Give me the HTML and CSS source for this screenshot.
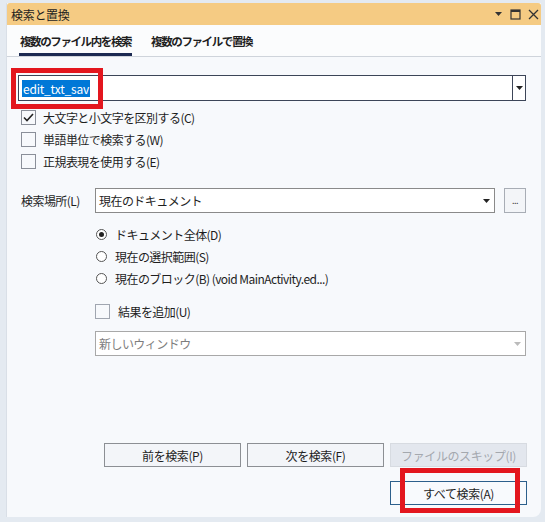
FILE: index.html
```html
<!DOCTYPE html>
<html lang="ja">
<head>
<meta charset="utf-8">
<link rel="stylesheet" href="styles.css">
</head>
<body>
<div class="window">
  <div class="titlebar">
    <span class="title">検索と置換</span>
    <div class="tb-icons">
      <svg width="9" height="6" viewBox="0 0 9 6"><path d="M1 1h7L4.5 5z" fill="#333"/></svg>
      <svg width="11" height="11" viewBox="0 0 11 11"><rect x="1" y="1" width="9" height="9" fill="none" stroke="#333" stroke-width="1.2"/><rect x="1" y="1" width="9" height="2" fill="#333"/></svg>
      <svg width="11" height="11" viewBox="0 0 11 11"><path d="M1 1l9 9M10 1l-9 9" stroke="#333" stroke-width="1.3"/></svg>
    </div>
  </div>
  <div class="tabs">
    <div class="tab active">複数のファイル内を検索</div>
    <div class="tab">複数のファイルで置換</div>
  </div>
  <div class="content">
    <div class="combo find">
      <div class="combo-text"><span class="sel">edit_txt_sav</span></div>
      <div class="combo-btn"><svg width="7" height="4" viewBox="0 0 7 4"><path d="M0 0h7L3.5 4z" fill="#222"/></svg></div>
    </div>
    <div class="checks">
      <label class="chk"><span class="box"><svg width="11" height="9" viewBox="0 0 11 9"><path d="M1 4.5l3 3L10 1" fill="none" stroke="#222" stroke-width="1.6"/></svg></span>大文字と小文字を区別する(C)</label>
      <label class="chk"><span class="box"></span>単語単位で検索する(W)</label>
      <label class="chk"><span class="box"></span>正規表現を使用する(E)</label>
    </div>
    <div class="look">
      <span class="look-label">検索場所(L)</span>
      <div class="combo where">
        <div class="combo-text">現在のドキュメント</div>
        <div class="combo-arrow"><svg width="7" height="4" viewBox="0 0 7 4"><path d="M0 0h7L3.5 4z" fill="#222"/></svg></div>
      </div>
      <div class="dots">...</div>
    </div>
    <div class="indent">
      <div class="radios">
        <label class="rad"><span class="circ on"></span>ドキュメント全体(D)</label>
        <label class="rad"><span class="circ"></span>現在の選択範囲(S)</label>
        <label class="rad"><span class="circ"></span>現在のブロック(B) (void MainActivity.ed...)</label>
      </div>
      <label class="chk append"><span class="box"></span>結果を追加(U)</label>
      <div class="combo disabled">
        <div class="combo-text">新しいウィンドウ</div>
        <div class="combo-arrow"><svg width="7" height="4" viewBox="0 0 7 4"><path d="M0 0h7L3.5 4z" fill="#bbb"/></svg></div>
      </div>
    </div>
    <div class="buttons">
      <div class="row">
        <button class="btn">前を検索(P)</button>
        <button class="btn">次を検索(F)</button>
        <button class="btn off">ファイルのスキップ(I)</button>
      </div>
      <div class="row">
        <button class="btn all">すべて検索(A)</button>
      </div>
    </div>
  </div>
  <div class="mark mark1"></div>
  <div class="mark mark2"></div>
</div>
</body>
</html>
```
FILE: styles.css
```css
* { box-sizing: border-box; }
html, body { margin: 0; padding: 0; }
body {
  width: 545px;
  height: 522px;
  background: #e4eaf1;
  font-family: "Noto Sans CJK JP", "Noto Sans", sans-serif;
  font-size: 12px;
  letter-spacing: -0.55px;
  color: #1e1e1e;
  overflow: hidden;
}
.window {
  position: relative;
  margin: 3px 0 0 6px;
  width: 535px;
  height: 514px;
  background: #f7f9fc;
  border-radius: 0 0 8px 0;
  border-left: 1px solid #d9dfe7;
}
.titlebar {
  height: 22px;
  background: #f5cb83;
  display: flex;
  align-items: center;
  justify-content: space-between;
  padding: 0 2px 0 4px;
  border-radius: 3px 3px 0 0;
}
.title { font-size: 12px; color: #1e1e1e; letter-spacing: -0.3px; }
.tb-icons { display: flex; align-items: center; gap: 7px; }
.tabs {
  height: 32px;
  display: flex;
  padding-left: 12px;
  background: #fbfcfd;
  border-bottom: 1px solid #cfd4db;
}
.tab {
  padding: 3px 1px 0;
  margin-right: 18px;
  display: flex;
  align-items: center;
  font-size: 11.5px;
  letter-spacing: -1.4px;
  font-weight: 700;
  color: #1e1e1e;
  border-bottom: 3px solid transparent;
}
.tab.active { border-bottom-color: #1c2a52; }
.content { padding: 18px 15px 0 11px; }
.combo {
  display: flex;
  height: 26px;
  background: #fff;
  border: 1px solid #7a7a7a;
}
.combo.find { border-color: #3c4558; }
.combo-text {
  flex: 1;
  display: flex;
  align-items: center;
  padding-left: 3px;
  white-space: nowrap;
}
.sel {
  background: #0078d7;
  color: #fff;
  padding: 0 1px;
  line-height: 17px;
  letter-spacing: -0.2px;
}
.combo-btn {
  width: 13px;
  border-left: 1px solid #3c4558;
  display: flex;
  align-items: center;
  justify-content: center;
}
.combo-arrow {
  width: 16px;
  display: flex;
  align-items: center;
  justify-content: center;
}
.checks { display: flex; flex-direction: column; gap: 7px; margin-top: 9px; padding-left: 3px; }
.chk { display: flex; align-items: center; gap: 7px; height: 15px; }
.box {
  width: 15px; height: 15px;
  border: 1px solid #8a8f99;
  background: #f7f9fc;
  display: flex; align-items: center; justify-content: center;
}
.look { display: flex; align-items: center; margin-top: 19px; padding-left: 3px; }
.look-label { width: 74px; }
.combo.where { width: 400px; height: 25px; border-color: #8a8a8a; }
.dots {
  margin-left: 9px;
  width: 22px; height: 25px;
  border: 1px solid #a8adb5;
  background: #f3f5f8;
  display: flex; align-items: center; justify-content: center;
  font-size: 9px; color: #444;
}
.indent { padding-left: 77px; }
.radios { display: flex; flex-direction: column; gap: 5px; margin-top: 13px; padding-left: 1px; }
.rad { display: flex; align-items: center; gap: 8px; height: 17px; }
.circ {
  width: 11px; height: 11px;
  border: 1px solid #555;
  border-radius: 50%;
  background: #fff;
  display: flex; align-items: center; justify-content: center;
}
.circ.on::after {
  content: "";
  width: 5px; height: 5px; border-radius: 50%; background: #222;
}
.chk.append { margin-top: 17px; gap: 8px; }
.chk.append .box { border-color: #a0a6b0; }
.combo.disabled {
  margin-top: 12px;
  height: 25px;
  border-color: #a8a8a8;
  color: #7d7d7d;
}
.buttons { margin-top: 87px; margin-right: -1px; display: flex; flex-direction: column; align-items: flex-end; gap: 14px; }
.row { display: flex; gap: 6px; }
.btn {
  width: 137px; height: 24px;
  font-family: inherit; font-size: 12px;
  letter-spacing: -0.4px;
  color: #1e1e1e;
  background: #f3f5f9;
  border: 1px solid #8c8f94;
  padding: 0;
}
.btn.off { background: #e3e7ee; color: #a4a8ae; border-color: #d7dbe1; }
.btn.all { background: #f8fafd; border-color: #2c5f8c; }
.mark {
  position: absolute;
  border: 5px solid #e3161e;
}
.mark1 { left: 4px; top: 65px; width: 92px; height: 41px; }
.mark2 { left: 393px; top: 465px; width: 120px; height: 45px; }
```
